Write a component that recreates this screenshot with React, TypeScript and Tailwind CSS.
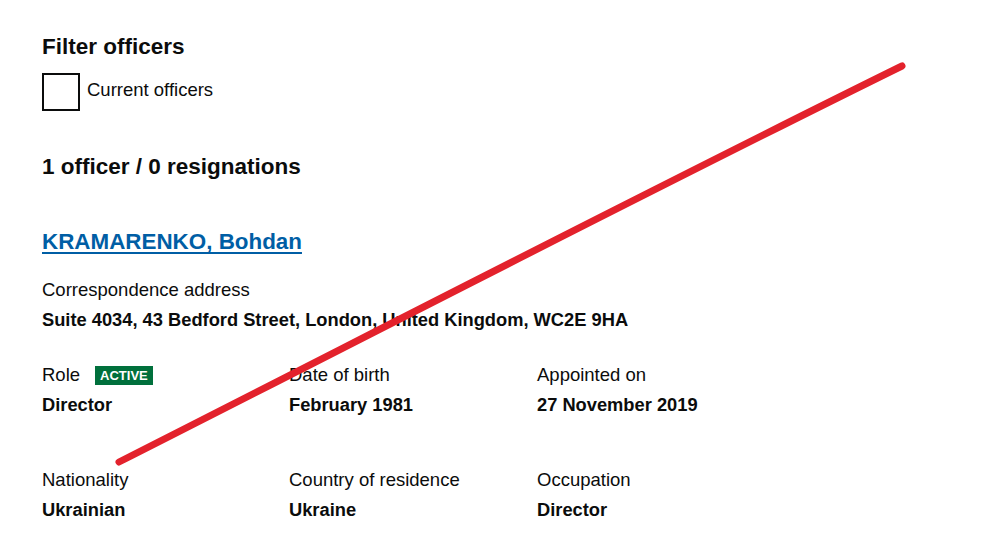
import React from 'react';

const font = { fontFamily: '"Liberation Sans", Arial, sans-serif' };

const Field: React.FC<{ label: React.ReactNode; value: string }> = ({ label, value }) => (
  <div className="flex flex-col">
    <div className="h-[30px] flex items-center text-[18.5px] text-[#0b0c0c]">{label}</div>
    <div className="h-[30px] flex items-center text-[18.3px] font-bold text-[#0b0c0c]">{value}</div>
  </div>
);

export default function App() {
  return (
    <div className="relative w-[998px] h-[550px] bg-white overflow-hidden" style={font}>
      <div className="pl-[42px] pt-[34px]">
        {/* Filter */}
        <h2 className="text-[22.5px] font-bold text-[#0b0c0c] leading-[26px]">Filter officers</h2>
        <label className="mt-[13px] flex items-center gap-[7px]">
          <span className="w-[38px] h-[38px] border-2 border-[#0b0c0c] bg-white" />
          <span className="text-[18.5px] text-[#0b0c0c] -mt-[4px]">Current officers</span>
        </label>

        {/* Count */}
        <h2 className="mt-[43px] text-[22.5px] font-bold text-[#0b0c0c] leading-[26px]">
          1 officer / 0 resignations
        </h2>

        {/* Officer */}
        <a href="#" className="mt-[49px] block w-fit text-[22.4px] font-bold text-[#005ea5] underline underline-offset-[3px] leading-[26px]">
          KRAMARENKO, Bohdan
        </a>

        <div className="mt-[20px] flex flex-col">
          <div className="h-[30px] flex items-center text-[18.5px] text-[#0b0c0c]">Correspondence address</div>
          <div className="h-[30px] flex items-center text-[18.3px] font-bold text-[#0b0c0c]">
            Suite 4034, 43 Bedford Street, London, United Kingdom, WC2E 9HA
          </div>
        </div>

        <div className="mt-[25px] grid grid-cols-[247px_248px_248px]">
          <Field
            label={
              <span className="flex items-center gap-[15px]">
                Role
                <span className="bg-[#00703c] text-white text-[13px] font-bold px-[5px] leading-[19px]">ACTIVE</span>
              </span>
            }
            value="Director"
          />
          <Field label="Date of birth" value="February 1981" />
          <Field label="Appointed on" value="27 November 2019" />
        </div>

        <div className="mt-[45px] grid grid-cols-[247px_248px_248px]">
          <Field label="Nationality" value="Ukrainian" />
          <Field label="Country of residence" value="Ukraine" />
          <Field label="Occupation" value="Director" />
        </div>
      </div>

      {/* red strike-through drawn over the page */}
      <svg className="absolute inset-0 pointer-events-none" width="998" height="550">
        <path d="M119 462 C 350 345, 650 190, 902 66" stroke="#e3222c" strokeWidth="7" strokeLinecap="round" fill="none" />
      </svg>
    </div>
  );
}
